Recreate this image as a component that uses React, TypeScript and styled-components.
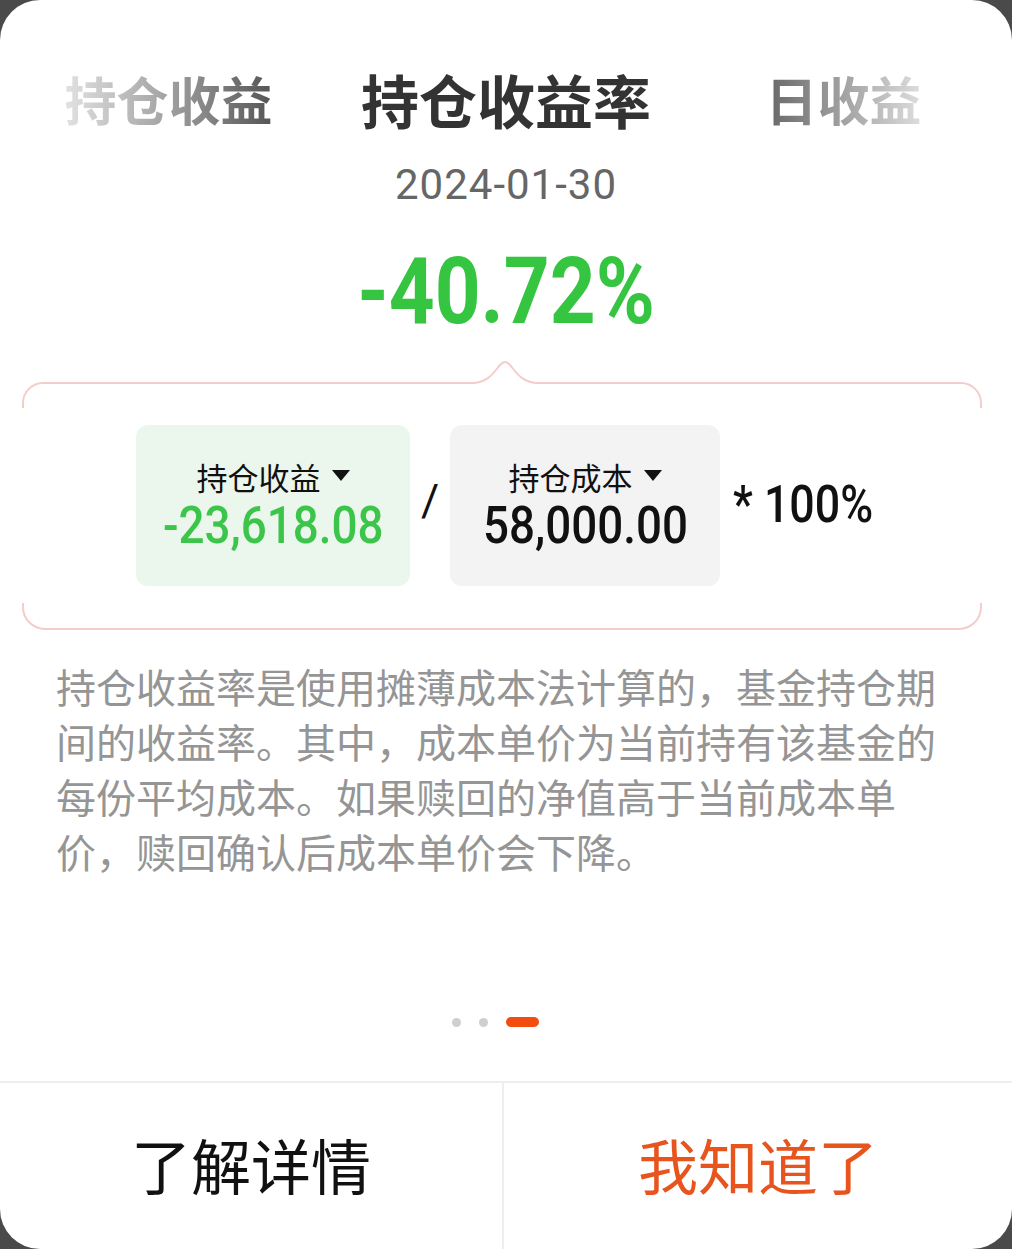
import React from "react";
import styled, { createGlobalStyle } from "styled-components";

const GlobalStyle = createGlobalStyle`
  html, body {
    margin: 0;
    padding: 0;
    background: #4a4a4a;
  }
  body {
    font-family: Roboto, "Noto Sans CJK SC", sans-serif;
  }
`;

const CN = `"Noto Sans CJK SC", "Noto Sans", sans-serif`;
const NUM = `Roboto, "Noto Sans CJK SC", sans-serif`;

const Card = styled.div`
  width: 1012px;
  height: 1249px;
  background: #fff;
  border-radius: 40px;
  overflow: hidden;
  display: flex;
  flex-direction: column;
`;

const Tabs = styled.div`
  display: grid;
  grid-template-columns: 337px 338px 337px;
  align-items: center;
  margin-top: 64px;
  height: 70px;
`;

const Tab = styled.div<{ $active?: boolean; $fade?: "left" | "right" }>`
  text-align: center;
  font-family: ${CN};
  font-weight: 700;
  font-size: ${(p) => (p.$active ? "58px" : "52px")};
  line-height: 70px;
  color: #333;
  span {
    background: ${(p) =>
      p.$fade === "left"
        ? "linear-gradient(90deg, #e2e2e2 0%, #a8a8a8 45%, #555 100%)"
        : p.$fade === "right"
        ? "linear-gradient(90deg, #666 0%, #a8a8a8 55%, #dedede 100%)"
        : "none"};
    -webkit-background-clip: ${(p) => (p.$fade ? "text" : "border-box")};
    background-clip: ${(p) => (p.$fade ? "text" : "border-box")};
    color: ${(p) => (p.$fade ? "transparent" : "#333")};
  }
`;

const DateText = styled.div`
  margin-top: 27px;
  text-align: center;
  font-family: ${NUM};
  font-size: 42px;
  line-height: 48px;
  color: #666;
  letter-spacing: 1px;
`;

const Rate = styled.div`
  margin-top: 33px;
  text-align: center;
  font-family: ${NUM};
  font-weight: 700;
  font-size: 92px;
  line-height: 100px;
  color: #35c540;
  span {
    display: inline-block;
    transform: scaleX(0.87);
  }
`;

const Formula = styled.div`
  margin-top: 16px;
  display: flex;
  flex-direction: column;
`;

const Bracket = styled.svg`
  display: block;
  margin-left: 22px;
`;

const Row = styled.div`
  display: flex;
  align-items: center;
  justify-content: center;
  padding-right: 8px;
  margin: 17px 0;
`;

const Box = styled.div<{ $green?: boolean }>`
  width: ${(p) => (p.$green ? "274px" : "270px")};
  height: 161px;
  border-radius: 12px;
  background: ${(p) => (p.$green ? "#ebf7ed" : "#f3f3f3")};
  display: flex;
  flex-direction: column;
  align-items: center;
  justify-content: center;
  gap: 10px;
`;

const Label = styled.div`
  display: flex;
  align-items: center;
  gap: 11px;
  font-family: ${CN};
  font-size: 31px;
  line-height: 34px;
  color: #111;
  margin-top: -3px;
`;

const Caret = styled.span`
  width: 0;
  height: 0;
  border-left: 9px solid transparent;
  border-right: 9px solid transparent;
  border-top: 11px solid #111;
  margin-top: -4px;
`;

const Value = styled.div<{ $green?: boolean }>`
  font-family: ${NUM};
  font-weight: 500;
  font-size: 52px;
  line-height: 44px;
  color: ${(p) => (p.$green ? "#3cc54a" : "#111")};
  transform: scaleX(0.88);
`;

const Slash = styled.div`
  width: 40px;
  text-align: center;
  font-family: ${NUM};
  font-size: 44px;
  color: #111;
  margin-top: -10px;
`;

const Times = styled.div`
  width: 135px;
  margin-left: 13px;
  font-family: ${NUM};
  font-weight: 500;
  font-size: 52px;
  color: #111;
  margin-top: -2px;
  white-space: nowrap;
  transform: scaleX(0.86);
  transform-origin: left center;
`;

const Desc = styled.p`
  margin: 28px 0 0;
  padding: 0 56px;
  font-family: ${CN};
  font-size: 40px;
  line-height: 55px;
  color: #959595;
`;

const Spacer = styled.div`
  flex: 1;
`;

const Dots = styled.div`
  display: flex;
  justify-content: center;
  align-items: center;
  gap: 18px;
  margin-bottom: 54px;
  padding-right: 22px;
`;

const Dot = styled.span<{ $active?: boolean }>`
  width: ${(p) => (p.$active ? "33px" : "9px")};
  height: ${(p) => (p.$active ? "10px" : "9px")};
  border-radius: 5px;
  background: ${(p) => (p.$active ? "#f24c10" : "#cfcfcf")};
`;

const Footer = styled.div`
  display: grid;
  grid-template-columns: 502px 1fr;
  height: 166px;
  border-top: 2px solid #eeeeee;
`;

const Button = styled.div<{ $primary?: boolean }>`
  display: flex;
  align-items: center;
  justify-content: center;
  font-family: ${CN};
  font-size: 60px;
  color: ${(p) => (p.$primary ? "#e8541d" : "#111")};
  border-left: ${(p) => (p.$primary ? "2px solid #eeeeee" : "none")};
  padding-bottom: 6px;
`;

const stroke = "#f4cdca";

export default function App() {
  return (
    <>
      <GlobalStyle />
      <Card>
        <Tabs>
          <Tab $fade="left"><span>持仓收益</span></Tab>
          <Tab $active><span>持仓收益率</span></Tab>
          <Tab $fade="right"><span>日收益</span></Tab>
        </Tabs>
        <DateText>2024-01-30</DateText>
        <Rate><span>-40.72%</span></Rate>
        <Formula>
          <Bracket width="960" height="50" viewBox="0 0 960 50">
            <path
              d="M1 50 V45 A20 20 0 0 1 21 25 H450 C466 25 472 14 478 7 Q483 1 488 7 C494 14 500 25 516 25 H939 A20 20 0 0 1 959 45 V50"
              fill="none"
              stroke={stroke}
              strokeWidth="2"
            />
          </Bracket>
          <Row>
            <Box $green>
              <Label>持仓收益<Caret /></Label>
              <Value $green>-23,618.08</Value>
            </Box>
            <Slash>/</Slash>
            <Box>
              <Label>持仓成本<Caret /></Label>
              <Value>58,000.00</Value>
            </Box>
            <Times>* 100%</Times>
          </Row>
          <Bracket width="960" height="28" viewBox="0 0 960 28">
            <path
              d="M1 0 V4 A22 22 0 0 0 23 26 H937 A22 22 0 0 0 959 4 V0"
              fill="none"
              stroke={stroke}
              strokeWidth="2"
            />
          </Bracket>
        </Formula>
        <Desc>
          持仓收益率是使用摊薄成本法计算的，基金持仓期间的收益率。其中，成本单价为当前持有该基金的每份平均成本。如果赎回的净值高于当前成本单价，赎回确认后成本单价会下降。
        </Desc>
        <Spacer />
        <Dots>
          <Dot />
          <Dot />
          <Dot $active />
        </Dots>
        <Footer>
          <Button>了解详情</Button>
          <Button $primary>我知道了</Button>
        </Footer>
      </Card>
    </>
  );
}
